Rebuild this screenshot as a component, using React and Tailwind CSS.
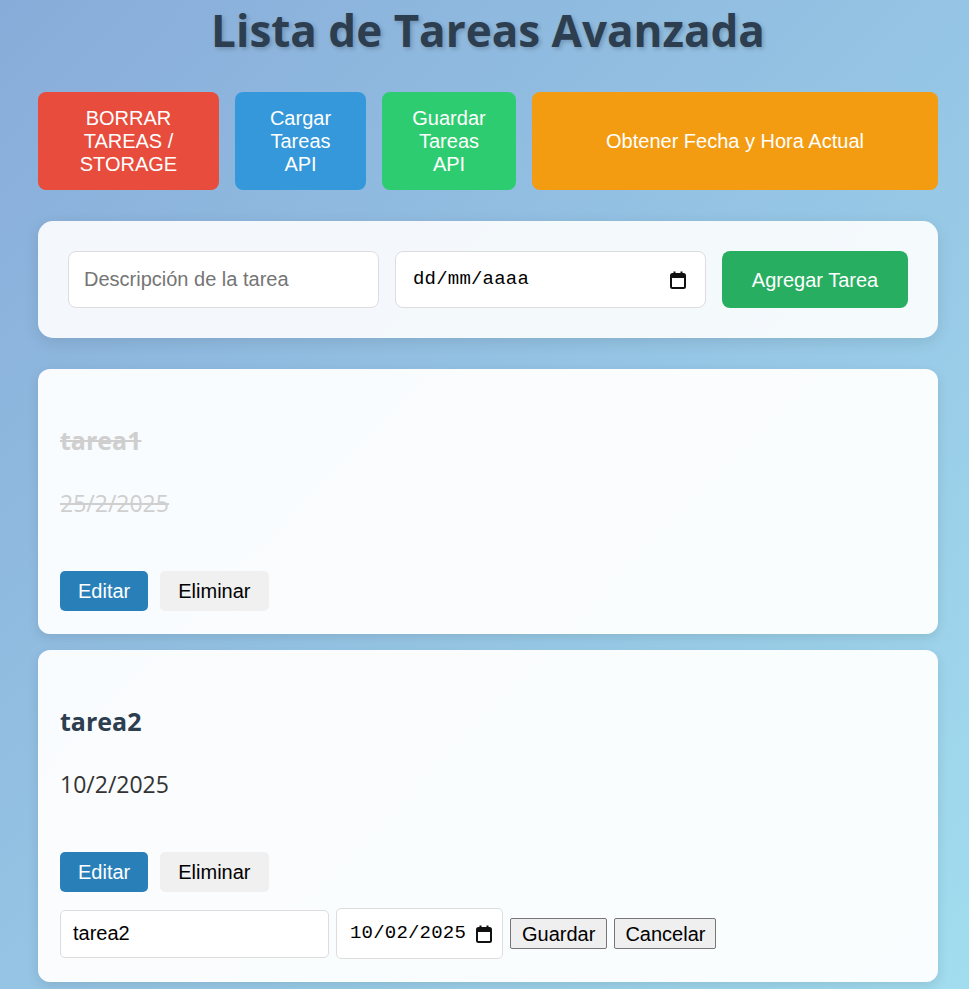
import { useState } from "react";

const sans = { fontFamily: '"Segoe UI", "Open Sans", "Noto Sans", sans-serif' };

function CalendarIcon() {
  return (
    <svg width="16" height="18" viewBox="0 0 16 18" className="shrink-0">
      <rect x="1" y="3" width="14" height="14" rx="1.5" fill="none" stroke="#111" strokeWidth="2" />
      <rect x="1" y="3" width="14" height="4" fill="#111" />
      <rect x="3.5" y="0.5" width="2" height="3" fill="#111" />
      <rect x="10.5" y="0.5" width="2" height="3" fill="#111" />
    </svg>
  );
}

function DateField({ value, className }) {
  return (
    <div
      className={`flex items-center justify-between bg-white border border-[#dddddd] ${className}`}
    >
      <span className="font-['Liberation_Mono',monospace] text-[19px] text-black tracking-[0.2px]">{value}</span>
      <CalendarIcon />
    </div>
  );
}

function TaskCard({ task, onEdit }) {
  return (
    <div className="rounded-[12px] bg-white/95 shadow-[0_4px_12px_rgba(0,0,0,0.1)] px-[22px] pt-[55px] pb-[23px]">
      <h3
        style={sans}
        className={`text-[25px] leading-[32px] font-bold ${task.done ? "text-[#cfcfcf] line-through" : "text-[#2c3e50]"}`}
      >
        {task.name}
      </h3>
      <p
        style={sans}
        className={`mt-[33px] text-[23px] leading-[28px] ${task.done ? "text-[#cfcfcf] line-through" : "text-[#333333]"}`}
      >
        {task.date}
      </p>
      <div className="mt-[54px] flex gap-3 font-['Liberation_Sans',Arial,sans-serif]">
        <button
          onClick={onEdit}
          className="h-[40px] px-[18px] rounded-[5px] bg-[#2980b9] text-white text-[20px]"
        >
          Editar
        </button>
        <button className="h-[40px] px-[18px] rounded-[5px] bg-[#f0f0f0] text-black text-[20px]">
          Eliminar
        </button>
      </div>
      {task.editing && (
        <div className="mt-4 flex items-center gap-[7px] font-['Liberation_Sans',Arial,sans-serif]">
          <input
            defaultValue={task.name}
            className="w-[269px] h-[48px] px-3 border border-[#dddddd] rounded-[5px] bg-white text-[20px] text-black outline-none"
          />
          <DateField value={task.editDate} className="w-[167px] h-[51px] pl-[13px] pr-[10px] rounded-[5px]" />
          <button className="h-[31px] px-[11px] border border-[#767676] rounded-[2px] bg-[#efefef] text-[20px] text-black leading-none">
            Guardar
          </button>
          <button className="h-[31px] px-[10px] border border-[#767676] rounded-[2px] bg-[#efefef] text-[20px] text-black leading-none">
            Cancelar
          </button>
        </div>
      )}
    </div>
  );
}

export default function App() {
  const [tasks] = useState([
    { id: 1, name: "tarea1", date: "25/2/2025", done: true },
    { id: 2, name: "tarea2", date: "10/2/2025", editDate: "10/02/2025", editing: true },
  ]);

  return (
    <div className="min-h-screen bg-gradient-to-br from-[#88acd9] to-[#a2ddef] pb-6">
      <div className="ml-[38px] w-[900px]">
        <h1
          style={{ ...sans, textShadow: "2px 2px 4px rgba(0,0,0,0.2)" }}
          className="text-center text-[44px] leading-[60px] font-bold text-[#2c3e50]"
        >
          Lista de Tareas Avanzada
        </h1>

        <div className="mt-[32px] flex gap-4 font-['Liberation_Sans',Arial,sans-serif] text-[20px] leading-[23px] text-white">
          <button className="w-[181px] h-[98px] px-5 rounded-[8px] bg-[#e74c3c]">BORRAR TAREAS / STORAGE</button>
          <button className="w-[131px] h-[98px] px-5 rounded-[8px] bg-[#3498db]">Cargar Tareas API</button>
          <button className="w-[134px] h-[98px] px-5 rounded-[8px] bg-[#2ecc71]">Guardar Tareas API</button>
          <button className="flex-1 h-[98px] px-5 rounded-[8px] bg-[#f39c12]">Obtener Fecha y Hora Actual</button>
        </div>

        <div className="mt-[31px] rounded-[15px] bg-white/90 shadow-[0_4px_15px_rgba(0,0,0,0.1)] p-[30px] flex gap-4 font-['Liberation_Sans',Arial,sans-serif]">
          <input
            placeholder="Descripción de la tarea"
            className="w-[311px] h-[57px] px-[15px] border border-[#dddddd] rounded-[8px] bg-white text-[20px] placeholder:text-[#757575] outline-none"
          />
          <DateField value="dd/mm/aaaa" className="w-[311px] h-[57px] pl-[17px] pr-[19px] rounded-[8px]" />
          <button className="w-[186px] h-[57px] rounded-[8px] bg-[#27ae60] text-white text-[20px]">Agregar Tarea</button>
        </div>

        <div className="mt-[31px] flex flex-col gap-4">
          {tasks.map((t) => (
            <TaskCard key={t.id} task={t} />
          ))}
        </div>
      </div>
    </div>
  );
}
